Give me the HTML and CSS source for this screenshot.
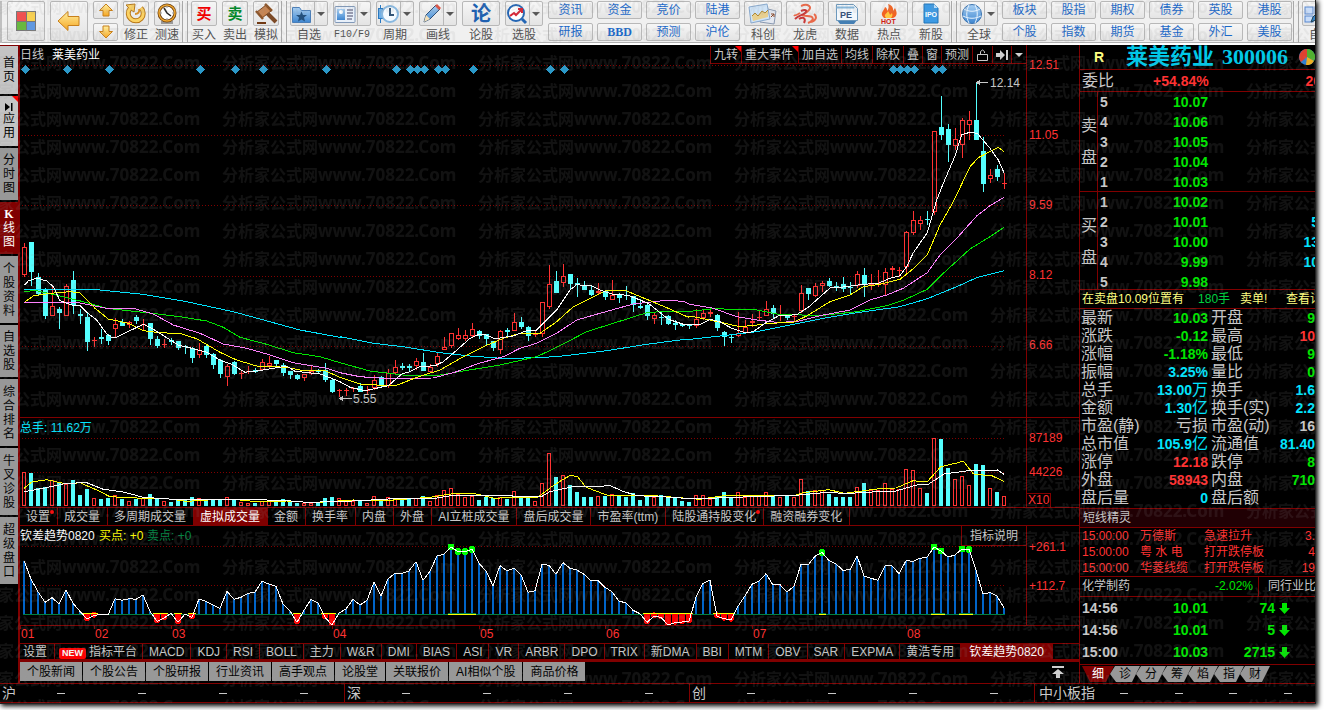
FILE: index.html
```html
<!DOCTYPE html>
<html lang="zh-CN">
<head>
<meta charset="utf-8">
<title>莱美药业 300006</title>
<link rel="stylesheet" href="styles.css">
</head>
<body>
<svg class="defs" width="0" height="0" aria-hidden="true">
  <defs>
    <linearGradient id="gold" x1="0" y1="0" x2="0" y2="1"><stop offset="0" stop-color="#fff0a0"/><stop offset="1" stop-color="#f5a623"/></linearGradient>
    <linearGradient id="blue" x1="0" y1="0" x2="0" y2="1"><stop offset="0" stop-color="#a8d0f4"/><stop offset="1" stop-color="#3f86cf"/></linearGradient>
  </defs>
</svg>
<div class="app">
  <header class="toolbar">
    <div class="group group-first">
      <button class="big" aria-label="首页"><svg width="22" height="22"><rect x="1" y="1" width="20" height="20" fill="#777"/><rect x="2" y="2" width="9" height="9" fill="#f05050"/><rect x="12" y="2" width="8" height="9" fill="#f8d050"/><rect x="2" y="12" width="9" height="8" fill="#68b840"/><rect x="12" y="12" width="8" height="8" fill="#6098e0"/></svg></button>
      <button class="big" aria-label="返回"><svg width="24" height="22"><path d="M1 11 11 1.500v5h11v9H11v5z" fill="url(#gold)" stroke="#c8801c"/></svg></button>
      <div class="pair pair-arrows">
        <button class="small" aria-label="上"><svg width="16" height="14"><path d="M8 1 14.500 7.500H11V13H5V7.500H1.500z" fill="url(#gold)" stroke="#c8801c"/></svg></button>
        <button class="small" aria-label="下"><svg width="16" height="14"><path d="M8 13 14.500 6.500H11V1H5v5.500H1.500z" fill="url(#gold)" stroke="#c8801c"/></svg></button>
      </div>
      <button class="tile"><span class="face"><svg width="22" height="22"><path d="M5 5.500A7.500 7.500 0 1 0 16 5" fill="none" stroke="#b87818" stroke-width="5"/><path d="M1 2l9-1-1 8-3-2z" fill="#fbd264" stroke="#b87818"/><path d="M5 5.500A7.500 7.500 0 1 0 16 5" fill="none" stroke="#fbd264" stroke-width="3"/><path d="M10 11c3 0 5-2 4-5" fill="none" stroke="#d89028" stroke-width="2"/></svg></span><span class="label">修正</span></button>
      <button class="tile"><span class="face"><svg width="22" height="22"><path d="M5 18h12v3H5z" fill="#999"/><circle cx="11" cy="10" r="8" fill="#fff" stroke="#6a3c0c" stroke-width="3"/><circle cx="11" cy="10" r="8" fill="none" stroke="#f0a830" stroke-width="1.500"/><path d="M8 5l3 5 4 3" fill="none" stroke="#222" stroke-width="1.500"/><path d="M11 3v2M11 15v2M4 10h2M16 10h2" stroke="#999"/></svg></span><span class="label">测速</span></button>
    </div>
    <div class="group">
      <button class="tile"><span class="face glyph red">买</span><span class="label">买入</span></button>
      <button class="tile"><span class="face glyph green">卖</span><span class="label">卖出</span></button>
      <button class="tile"><span class="face"><svg width="24" height="22"><path d="M13 10l9 9" stroke="#7c4a26" stroke-width="4"/><path d="M3 9 12 2l5 6-9 7z" fill="#c88450" stroke="#7a4620"/><path d="M2 8l7 8M11 1l7 7" stroke="#8c5428" stroke-width="2.500"/><path d="M3 20h9" stroke="#713a14" stroke-width="2"/></svg></span><span class="label">模拟</span></button>
    </div>
    <div class="group">
      <button class="tile wide"><span class="face"><svg width="22" height="20"><path d="M1.500 3.500h7l2 3h9v12h-18z" fill="url(#blue)" stroke="#4a7eb8"/><path d="M10.500 7.500l1.500 3.500h4l-3 2.500 1 4-3.500-2-3.500 2 1-4-3-2.500h4z" fill="#24507c"/></svg><span class="drop"></span></span><span class="label">自选</span></button>
      <button class="tile wide"><span class="face"><svg width="22" height="20"><rect x="1" y="2.500" width="20" height="16" rx="1" fill="#e8f0fa" stroke="#8098b8"/><rect x="3" y="5" width="8" height="11" fill="url(#blue)"/><circle cx="7" cy="8" r="2" fill="#fff"/><path d="M13 6h6M13 9h6M13 12h6M13 15h5" stroke="#446"/></svg><span class="drop"></span></span><span class="label mono">F10/F9</span></button>
      <button class="tile wide"><span class="face"><svg width="22" height="22"><path d="M3.500 2v18" stroke="#2878c0"/><rect x="1.500" y="5.500" width="4" height="10" fill="#70b0e8" stroke="#2878c0"/><circle cx="13" cy="11" r="8" fill="#f4faff" stroke="#88b8e0" stroke-width="2"/><path d="M13 5v7h4" stroke="#357" stroke-width="2" fill="none"/></svg><span class="drop"></span></span><span class="label">周期</span></button>
      <button class="tile wide"><span class="face"><svg width="22" height="22"><path d="M4 19l2-7L16 2l4 4-10 10z" fill="url(#blue)" stroke="#2c4e78"/><path d="M15 3l2-2 4 4-2 2z" fill="#e05040"/><path d="M6 12l4 4-6 3z" fill="#f4e0b8"/></svg><span class="drop"></span></span><span class="label">画线</span></button>
      <button class="tile wide"><span class="face glyph blue">论</span><span class="label">论股</span></button>
      <button class="tile wide"><span class="face"><svg width="22" height="22"><circle cx="10" cy="10" r="8" fill="#fff" stroke="#2466b4" stroke-width="2"/><path d="M16 16l4 4" stroke="#2466b4" stroke-width="3"/><path d="M4 13l4-3 2 2 5-5M12 6h4v4" fill="none" stroke="#d82030" stroke-width="2"/></svg><span class="drop"></span></span><span class="label">选股</span></button>
      <div class="pairs">
        <button class="small">资讯</button><button class="small">资金</button><button class="small">竞价</button><button class="small">陆港</button>
        <button class="small">研报</button><button class="small bold">BBD</button><button class="small">预测</button><button class="small">沪伦</button>
      </div>
      <div class="tight">
        <button class="tile wide"><span class="face"><svg width="30" height="22"><path d="M12 4l16 4-2 13-14-2z" fill="#e4e8f0" stroke="#8898b0"/><path d="M1 4l18-3 3 15-19 4z" fill="#cfe4f8" stroke="#88a8cc"/><path d="M4 13l3-3 3 3 4-5 3 2 3-3v7L5 18z" fill="#e8d090"/><path d="M4 13l3-3 3 3 4-5 3 2 3-3" fill="none" stroke="#b08830"/><path d="M23 14l3-3m-3 0h3v3" stroke="#842" fill="none"/></svg></span><span class="label">科创</span></button>
        <button class="tile wide"><span class="face"><svg width="26" height="22"><path d="M9 3c7-3 12 1 7 5s-8 5-1 5 8 4 1 7M8 10c-3 2-5 3-6 2M22 11c4 3 1 8-4 8" fill="none" stroke="#e86848" stroke-width="2"/><path d="M9 8c4-2 7-1 4 2-4 3-6 2-10 6M7 16c5-3 7 0 5 4" fill="none" stroke="#c83838" stroke-width="2"/></svg></span><span class="label">龙虎</span></button>
        <button class="tile wide"><span class="face"><svg width="24" height="22"><path d="M2 17l3 4h14l3-4z" fill="#447fb4"/><path d="M1.500 1.500h17l4 4v12h-21z" fill="#f2f7fc" stroke="#6c98bc"/><path d="M1.500 4.500h18" stroke="#88b8dc" stroke-width="2"/><text x="5" y="15" class="icon-text navy">PE</text></svg></span><span class="label">数据</span></button>
        <button class="tile wide"><span class="face"><svg width="24" height="22"><path d="M7 15C2 10 7 8 8 4c2 1 2 2 2 4 2-2 2-5 1-7 6 2 5 6 5 7l2-3c2 4 3 8-2 10z" fill="#f26422"/><path d="M9 15c-3-4 1-4 2-7 1 2 2 3 2 4l2-2c1 2 0 4-1 5z" fill="#ffc840"/><text x="4" y="21" class="icon-text hot">HOT</text></svg></span><span class="label">热点</span></button>
        <button class="tile wide"><span class="face"><svg width="20" height="22"><path d="M3 1h10l4 4v15H3z" fill="#3d9ae4" stroke="#2074b8"/><path d="M13 1v4h4" fill="#b8dcf8"/><text x="4" y="14" class="icon-text white">IPO</text></svg></span><span class="label">新股</span></button>
      </div>
    </div>
    <div class="group group-tight">
      <button class="tile wide"><span class="face"><svg width="22" height="22"><circle cx="11" cy="11" r="9.500" fill="url(#blue)" stroke="#3c74b0"/><path d="M3 6c5 3 11 3 16 0M2 13c6 3 12 3 18 0M8 2c-3 6-3 12 0 18M14 2c3 6 3 12 0 18" fill="none" stroke="#e8f4ff"/></svg><span class="drop"></span></span><span class="label">全球</span></button>
      <div class="pairs">
        <button class="small">板块</button><button class="small">股指</button><button class="small">期权</button><button class="small">债券</button><button class="small">英股</button><button class="small">港股</button>
        <button class="small">个股</button><button class="small">指数</button><button class="small">期货</button><button class="small">基金</button><button class="small">外汇</button><button class="small">美股</button>
      </div>
    </div>
    <div class="group group-last">
      <button class="tile wide"><span class="face face-start"><svg width="22" height="22"><rect x="2" y="4" width="8" height="7" fill="#c8dcf8" stroke="#5888d0"/><rect x="12" y="4" width="8" height="7" fill="#c8dcf8" stroke="#5888d0"/><rect x="2" y="13" width="8" height="6" fill="#c8dcf8" stroke="#5888d0"/><path d="M8 19l2-5 9-9 3 3-9 9z" fill="#3884c4" stroke="#245"/></svg></span><span class="label">自定</span></button>
    </div>
  </header>

  <div class="body">
    <nav class="side">
      <button class="light">首<br>页</button>
      <button class="light marked"><svg width="10" height="10"><path d="M1 1v8l5-4zM7 1h1.500v8H7z" fill="#000"/></svg>应<br>用</button>
      <button>分<br>时<br>图</button>
      <button class="on"><b>K</b><br>线<br>图</button>
      <button class="tall">个<br>股<br>资<br>料</button>
      <button>自<br>选<br>股</button>
      <button class="tall">综<br>合<br>排<br>名</button>
      <button class="tall">牛<br>叉<br>诊<br>股</button>
      <button class="tall">超<br>级<br>盘<br>口</button>
    </nav>

    <main class="charts">
      <section class="panel">
        <div class="plot">
          <div class="chart-head">
            <span>日线</span><h2>莱美药业</h2>
            <div class="chart-tools">
              <button class="marked">九转</button><button class="marked wide-tool">重大事件</button><button>加自选</button><button>均线</button><button>除权</button><button>叠</button><button>窗</button><button>预测</button>
              <button aria-label="锁定"><svg width="13" height="14"><path d="M1.500 6.500h10v6h-10zM4.500 6V3.500q2-3 4 0V5" fill="none" stroke="#c8c8c8"/></svg></button>
              <button aria-label="最新"><svg width="12" height="12"><path d="M0 4h4V1l5 5-5 5V8H0zM10 1h2v10h-2z" fill="#d0d0d0"/></svg></button>
              <button aria-label="更多"><svg width="8" height="8"><path d="M0 2h8L4 6z" fill="#d0d0d0"/></svg></button>
            </div>
          </div>
          <svg id="price" class="price-svg"></svg>
        </div>
        <div class="axis axis-price"><span>12.51</span><span>11.05</span><span>9.59</span><span>8.12</span><span>6.66</span></div>
      </section>

      <section class="panel panel-volume">
        <div class="plot"><svg id="volume" class="volume-svg"></svg></div>
        <div class="axis axis-volume"><span>87189</span><span>44226</span><span class="unit">X10</span></div>
      </section>

      <nav class="tabs tabs-top">
        <button class="dot">设置</button><button>成交量</button><button>多周期成交量</button><button class="on">虚拟成交量</button><button>金额</button><button>换手率</button><button>内盘</button><button>外盘</button><button>AI立桩成交量</button><button>盘后成交量</button><button>市盈率(ttm)</button><button class="dot">陆股通持股变化</button><button>融资融券变化</button>
      </nav>

      <section class="panel panel-trend">
        <div class="plot">
          <svg id="trend" class="trend-svg"></svg>
          <button class="explain">指标说明</button>
        </div>
        <div class="axis axis-trend"><span>+261.1</span><span>+112.7</span></div>
      </section>
      <svg id="months" class="months-svg"></svg>

      <nav class="tabs tabs-bottom">
        <button>设置</button><button class="platform"><em>NEW</em>指标平台</button><button>MACD</button><button>KDJ</button><button>RSI</button><button>BOLL</button><button>主力</button><button>W&amp;R</button><button>DMI</button><button>BIAS</button><button>ASI</button><button>VR</button><button>ARBR</button><button>DPO</button><button>TRIX</button><button>新DMA</button><button>BBI</button><button>MTM</button><button>OBV</button><button>SAR</button><button>EXPMA</button><button>黄浩专用</button><button class="on">钦差趋势0820</button>
      </nav>
      <nav class="news">
        <button>个股新闻</button><button>个股公告</button><button>个股研报</button><button>行业资讯</button><button>高手观点</button><button>论股堂</button><button>关联报价</button><button>AI相似个股</button><button>商品价格</button>
        <button class="top" aria-label="置顶"><svg width="12" height="12"><path d="M0 0h12v2H0zM6 3l6 5H8v4H4V8H0z" fill="#d0d0d0"/></svg></button>
      </nav>
    </main>

    <aside class="quote">
      <h1><small>R</small><span>莱美药业</span> <b>300006</b>
        <svg width="16" height="16"><circle cx="8" cy="8" r="8" fill="#3080d0"/><path d="M8 8V0a8 8 0 0 1 7 12z" fill="#50b030"/><path d="M8 8 2 13A8 8 0 0 1 8 0z" fill="#e04030"/><path d="M8 8l7 4a8 8 0 0 1-8 4z" fill="#f0b020"/></svg>
      </h1>
      <div class="ratio"><span>委比</span><b class="up">+54.84%</b><b class="up cut">20</b></div>
      <div class="book">
        <div class="book-side">卖<br>盘</div>
        <table>
          <tr><th>5</th><td>10.07</td><td></td></tr><tr><th>4</th><td>10.06</td><td></td></tr><tr><th>3</th><td>10.05</td><td></td></tr><tr><th>2</th><td>10.04</td><td></td></tr><tr><th>1</th><td>10.03</td><td></td></tr>
        </table>
      </div>
      <div class="book">
        <div class="book-side">买<br>盘</div>
        <table>
          <tr><th>1</th><td>10.02</td><td></td></tr><tr><th>2</th><td>10.01</td><td>5</td></tr><tr><th>3</th><td>10.00</td><td>13</td></tr><tr><th>4</th><td>9.99</td><td>10</td></tr><tr><th>5</th><td>9.98</td><td></td></tr>
        </table>
      </div>
      <p class="notice"><span>在卖盘10.09位置有</span><span class="down">180手</span><span>卖单!</span><span>查看详</span></p>
      <table class="stats">
        <tr><th>最新</th><td class="down">10.03</td><th>开盘</th><td class="down">9</td></tr>
        <tr><th>涨跌</th><td class="down">-0.12</td><th>最高</th><td class="up">10</td></tr>
        <tr><th>涨幅</th><td class="down">-1.18%</td><th>最低</th><td class="down">9</td></tr>
        <tr><th>振幅</th><td class="vol">3.25%</td><th>量比</th><td class="down">0</td></tr>
        <tr><th>总手</th><td class="vol">13.00<i>万</i></td><th>换手</th><td class="vol">1.6</td></tr>
        <tr><th>金额</th><td class="vol">1.30<i>亿</i></td><th>换手(实)</th><td class="vol">2.2</td></tr>
        <tr><th>市盈(静)</th><td><i>亏损</i></td><th>市盈(动)</th><td>16</td></tr>
        <tr><th>总市值</th><td class="vol">105.9<i>亿</i></td><th>流通值</th><td class="vol">81.40</td></tr>
        <tr><th>涨停</th><td class="up">12.18</td><th>跌停</th><td class="down">8</td></tr>
        <tr><th>外盘</th><td class="up">58943</td><th>内盘</th><td class="down">710</td></tr>
        <tr><th>盘后量</th><td class="vol">0</td><th>盘后额</th><td></td></tr>
      </table>
      <h3>短线精灵</h3>
      <table class="alerts">
        <tr><td>15:00:00</td><td>万德斯</td><td>急速拉升</td><td>3.</td></tr>
        <tr><td>15:00:00</td><td>粤 水 电</td><td>打开跌停板</td><td>4</td></tr>
        <tr><td>15:00:00</td><td>华菱线缆</td><td>打开跌停板</td><td>19</td></tr>
      </table>
      <div class="sector"><span>化学制药</span><span class="down">-2.02%</span><button>同行业比</button></div>
      <table class="ticks">
        <tr><th>14:56</th><td>10.01</td><td>74</td><td><svg width="11" height="11"><path d="M3 0h5v5h3l-5.500 6L0 5h3z" fill="#00e600"/></svg></td></tr>
        <tr><th>14:56</th><td>10.01</td><td>5</td><td><svg width="11" height="11"><path d="M3 0h5v5h3l-5.500 6L0 5h3z" fill="#00e600"/></svg></td></tr>
        <tr><th>15:00</th><td>10.03</td><td>2715</td><td><svg width="11" height="11"><path d="M3 0h5v5h3l-5.500 6L0 5h3z" fill="#00e600"/></svg></td></tr>
      </table>
      <nav class="slants"><button class="on">细</button><button>诊</button><button>分</button><button>筹</button><button>焰</button><button>指</button><button>财</button></nav>
    </aside>
  </div>

  <footer class="indices">
    <div><span>沪</span><i></i><i></i><i></i><i></i></div>
    <div><span>深</span><i></i><i></i><i></i><i></i></div>
    <div><span>创</span><i></i><i></i><i></i><i></i></div>
    <div class="sme"><span>中小板指</span><i></i><i></i><i></i><i></i></div>
  </footer>
  <svg class="watermark" aria-hidden="true">
    <defs><pattern id="mark" x="-34" y="-7" width="256" height="28" patternUnits="userSpaceOnUse"><text x="0" y="20" class="mark-cjk">分析家公式网</text><text x="96" y="20" class="mark-latin">www.70822.Com</text></pattern></defs>
    <rect width="100%" height="100%" fill="url(#mark)"/>
  </svg>
</div>
<script src="charts.js"></script>
</body>
</html>
```

FILE: styles.css
```css
* { box-sizing: border-box; }
body { margin: 0; padding: 0 9px 8px 0; background: #fff; font: 12px/14px "Liberation Sans", "Noto Sans CJK SC", sans-serif; color: #c8c8c8; overflow: hidden; }
button { margin: 0; padding: 0; border: 0; background: none; font: inherit; color: inherit; white-space: nowrap; }
h1, h2, h3, p { margin: 0; font: inherit; }
table { border-collapse: collapse; }
th, td { padding: 0; font-weight: inherit; text-align: left; white-space: nowrap; }
svg { display: block; }
i, em { font-style: normal; }
.defs { position: absolute; }
.app { position: relative; display: flex; flex-direction: column; min-height: calc(100vh - 8px); background: #000; overflow: hidden; outline: 1px solid #222; box-shadow: 2px 2px 5px 1px #000; }

/* toolbar */
.toolbar { display: flex; background: #f0f0f0; border-bottom: 2px solid #fff; box-shadow: inset 0 -1px #b0b0b0; height: 45px; padding-top: 1px; color: #505050; overflow: hidden; }
.group { display: flex; flex: none; gap: 5px; height: 42px; margin-left: 4px; padding: 0 1px 0 3px; border-left: 1px solid #a8a8a8; border-right: 1px solid #a8a8a8; }
.group-first { margin-left: 0; padding: 0 2px 0 5px; border-left: 2px solid #c0c0c0; }
.group-first + .group { padding-right: 2px; }
.group-tight { gap: 4px; }
.group > * { flex: none; }
.big, .small, .face { display: flex; align-items: center; justify-content: center; border: 1px solid #b8b8b8; border-radius: 2px; background: linear-gradient(#f6f6f6, #e4e4e4); }
.big { width: 38px; height: 40px; }
.small { width: 45px; height: 18px; color: #1a68c8; }
.small.bold { font: bold 12px "Liberation Serif", serif; }
.pair { display: grid; gap: 4px; align-content: start; }
.pair-arrows .small { width: 25px; }
.pairs { display: grid; grid-auto-flow: row; grid-template-columns: repeat(4, 45px); gap: 4px; align-content: start; }
.group-tight .pairs { grid-template-columns: repeat(6, 45px); }
.pairs + .tight { margin-left: -1px; }
.tight { display: flex; gap: 4px; }
.tile { display: flex; flex-direction: column; align-items: center; width: 26px; }
.wide { width: 38px; }
.face { width: 100%; height: 25px; }
.face-start { justify-content: flex-start; }
.label { padding-top: 2px; line-height: 14px; }
.label.mono { font: 10px/14px "Liberation Mono", monospace; }
.glyph { font-size: 15px; font-weight: bold; }
.glyph.red { color: #f00000; }
.glyph.green { color: #008828; }
.glyph.blue { color: #2060b0; font-size: 20px; }
.drop { display: flex; align-items: center; height: 100%; margin-left: 1px; padding: 0 2px; border-left: 1px solid #b8b8b8; }
.drop::after { content: ""; border: 4px solid transparent; border-top-color: #555; border-bottom: 0; }
.icon-text { font: bold 9px "Liberation Sans", sans-serif; }
.toolbar .navy { fill: #345078; font-size: 9px; }
.toolbar .hot { fill: #d02010; font-size: 7px; }
.toolbar .white { fill: #fff; font-size: 7px; }

.body { display: flex; flex: 1; }

/* left navigation */
.side { display: flex; flex-direction: column; gap: 2px; width: 20px; border-top: 1px solid #800000; border-right: 2px solid #800000; }
.side button { width: 18px; padding: 5px 0; background: #989898; color: #000; text-align: center; line-height: 14px; white-space: normal; position: relative; }
.side .tall { padding: 6px 0 5px; }
.side .light { background: #c4c4c4; padding: 10px 0; }
.side .light.marked { padding: 6px 0; }
.side svg { margin: 0 auto; }
.side .on { background: #800000; color: #fff; }
.side b { font-family: "Liberation Serif", serif; }
.marked { position: relative; }
.marked::after { content: ""; position: absolute; top: 0; right: 0; border: 3px solid transparent; border-top-color: #f00; border-right-color: #f00; }

/* chart column */
.charts { flex: 1; min-width: 0; border-right: 1px solid #800000; }
.panel { display: flex; border-bottom: 1px solid #800000; }
.plot { position: relative; flex: 1; min-width: 0; border-right: 1px solid #800000; }
.plot > svg { width: 100%; }
.axis { width: 52px; padding-left: 2px; color: #ff3232; }
.axis span { display: block; }
.chart-head { display: flex; gap: 8px; height: 19px; padding-top: 1px; line-height: 18px; }
.chart-head h2 { color: #fff; }
.chart-tools { display: flex; margin-left: auto; border-bottom: 1px solid #800000; }
.chart-tools button { display: flex; align-items: center; padding: 0 3px; border-left: 1px solid #800000; }
.chart-tools .wide-tool { padding: 0 5px 0 3px; }
.price-svg { height: 353px; }
.axis-price { padding-top: 13px; }
.axis-price span { height: 70px; }
.volume-svg { height: 89px; }
.axis-volume { padding-top: 13px; }
.axis-volume span { height: 34px; }
.axis-volume span:nth-child(2) { height: 28px; }
.axis-volume .unit { width: 25px; height: 14px; margin-left: -3px; padding-left: 1px; border: 1px solid #800000; border-bottom: 0; line-height: 13px; }
.trend-svg { height: 99px; }
.axis-trend { padding-top: 14px; }
.axis-trend span { height: 39px; }
.explain { position: absolute; top: 0; right: 0; height: 20px; padding: 0 8px; border: 1px solid #800000; border-width: 0 0 1px 1px; background: #000; }
.months-svg { width: 100%; height: 17px; }
.up { color: #ff3232; fill: #ff3232; }
.down { color: #00e600; }
.vol { color: #00e5ff; }
svg .c-vol { fill: #00e5ff; }
svg .c-white { fill: #fff; }
svg .c-yellow { fill: #ffff00; }
svg .c-sea { fill: #008040; }
svg .c-gray { fill: #c8c8c8; }
svg text { font-size: 12px; }

.tabs { display: flex; height: 18px; border-bottom: 1px solid #800000; }
.tabs button { position: relative; padding: 0 7px 0 6px; border-right: 1px solid #800000; }
.tabs .on { background: #800000; color: #fff; }
.tabs .dot::after { content: ""; position: absolute; top: 2px; right: 3px; width: 4px; height: 4px; border-radius: 2px; background: #f00; }
.tabs-bottom { height: 19px; border-top: 1px solid #800000; border-bottom: 3px solid #800000; }
.tabs-bottom button { padding: 0 6px; flex: none; }
.tabs-bottom button:first-child { padding: 0 7px 0 3px; }
.tabs-bottom .platform { padding: 0 5px 0 4px; }
.tabs-bottom .on { padding: 0 8px; }
.tabs em { display: inline-block; margin-right: 3px; padding: 0 3px; border-radius: 2px; background: #f00; color: #fff; font-weight: bold; font-size: 9px; line-height: 11px; }
.news { display: flex; gap: 1px; height: 19px; }
.news button { padding: 0 7px; background: #989898; color: #000; }
.news .top { margin-left: auto; padding: 0 15px; background: none; }

/* quote panel */
.quote { width: 235px; overflow: hidden; }
.quote h1 { display: flex; align-items: center; height: 25px; padding-left: 14px; border-bottom: 1px solid #800000; color: #00c8e8; font: bold 22px/24px "Liberation Serif", "Noto Sans CJK SC", serif; white-space: nowrap; }
.quote h1 small { width: 33px; color: #ffff80; font: bold 14px "Liberation Sans", sans-serif; }
.quote h1 b { margin: 0 11px 0 8px; }
.quote h1 svg { flex: none; }
.ratio { display: flex; align-items: center; height: 22px; padding-left: 2px; border-bottom: 1px solid #800000; font-size: 16px; }
.ratio b { font-size: 14px; }
.ratio span { width: 71px; }
.ratio .cut { margin: 0 -6px 0 auto; }
.book { display: flex; height: 100px; border-bottom: 1px solid #800000; font-size: 16px; }
.book + .book { height: 98px; }
.book-side { flex: none; width: 18px; padding: 18px 0 0 1px; border-right: 1px solid #800000; line-height: 32px; }
.book table { width: 100%; font-weight: bold; font-size: 14px; margin-right: -4px; }
.book tr { height: 20px; }
.book th { width: 40px; padding-left: 2px; font-size: 14px; font-weight: bold; }
.book td { width: 70px; text-align: right; color: #00e600; }
.book td + td { width: auto; color: #00e5ff; }
.notice { display: flex; align-items: center; height: 19px; padding-left: 2px; border-bottom: 1px solid #800000; color: #ffff80; white-space: nowrap; }
.notice span { margin-right: 10px; }
.notice span:first-child { margin-right: 14px; }
.notice span:last-child { margin: 0 -7px 0 auto; }
.notice .down { color: #00d040; }
.stats { width: 100%; table-layout: fixed; font-size: 16px; line-height: 18px; }
.stats tr, .stats td { height: 18px; }
.stats th { width: 66px; padding-left: 1px; white-space: nowrap; }
.stats td { width: 62px; text-align: right; font-size: 14px; font-weight: bold; line-height: 16px; }
.stats th + td + th { padding-left: 3px; }
.stats td:last-child { width: 41px; }
.stats td i { font-size: 16px; font-weight: normal; }
.quote h3 { height: 20px; margin-top: 1px; padding-left: 3px; border: 1px solid #800000; border-width: 1px 0; background: #200004; line-height: 18px; }
.alerts { width: 100%; color: #ff3232; }
.alerts tr { height: 16px; }
.alerts td { width: 58px; padding-left: 2px; }
.alerts td + td { width: 64px; }
.alerts td + td + td { width: 70px; }
.alerts td:last-child { width: auto; text-align: right; }
.sector { display: flex; height: 21px; border: 1px solid #800000; border-width: 1px 0; line-height: 19px; padding-left: 2px; }
.sector .down { margin-left: auto; padding-right: 5px; }
.sector button { margin-right: -1px; padding-left: 9px; border-left: 1px solid #800000; }
.ticks { width: 100%; font-size: 14px; }
.ticks tr { height: 22px; }
.ticks th { width: 58px; padding-left: 2px; font-weight: bold; }
.ticks td { width: 70px; font-weight: bold; text-align: right; color: #00e600; }
.ticks td + td { width: 67px; }
.ticks td:last-child { width: auto; padding-left: 4px; }
.slants { display: flex; height: 19px; margin-top: 1px; padding: 1px 0 1px 2px; border-top: 1px solid #800000; }
.slants button { width: 30px; margin-right: -4px; background: #989898; color: #000; clip-path: polygon(0 50%, 5px 0, 100% 0, 22px 100%, 6px 100%); }
.slants .on { width: 32px; background: #800000; color: #fff; clip-path: polygon(0 0, 100% 0, 24px 100%, 8px 100%); }

/* market indices */
.indices { display: grid; grid-template-columns: 1fr 1fr 1fr 280px; height: 20px; border: 1px solid #800000; border-width: 1px 0; font-size: 14px; line-height: 17px; }
.indices div { display: grid; grid-template-columns: 18px repeat(4, 1fr); align-items: center; padding-left: 2px; border-right: 1px solid #800000; }
.indices .sme { grid-template-columns: 58px repeat(4, 1fr); padding-left: 4px; border: 0; }
.indices i { justify-self: center; width: 8px; height: 1px; background: #c8c8c8; }

.watermark { position: absolute; inset: 0; width: 100%; height: 100%; pointer-events: none; }
.watermark text { fill: rgba(150, 150, 150, .12); font-weight: bold; }
svg .mark-cjk { font-size: 16px; }
svg .mark-latin { font: bold 17px "Noto Sans", sans-serif; }
```

FILE: charts.js
```js
const RED = '#ff3232', CYAN = '#54ffff', FRAME = '#800000';
const STEP = 7, LEFT = 22, MID = 24.5;

// one bar per day: direction, high, body top, body bottom, low
const candles = `r243,247,275,277 c242,242,272,286 c273,277,294,295 c288,290,316,319 r285,306,316,316 c307,309,313,329 r284,286,316,316 c271,280,305,314 c309,314,316,324 c313,317,342,351
r337,340,341,347 c329,337,339,344 c334,335,341,345 r318,324,329,338 c319,322,326,326 r321,322,325,328 c315,317,321,324 r319,324,325,330 c323,323,339,345 c336,339,346,348
r339,344,345,348 c338,340,342,345 c341,341,348,350 c345,346,347,354 c347,348,358,363 r343,350,355,358 c345,346,355,358 c353,354,365,369 c359,360,374,378 r364,366,377,386
c361,362,374,375 r371,373,374,379 r366,371,372,374 c368,370,372,373 r359,362,370,371 r356,363,366,368 c360,360,364,367 c363,365,373,376 c371,371,375,379 c374,375,379,380
r374,374,378,381 r366,371,374,375 c369,371,372,374 c363,370,380,382 c378,380,392,393 r389,390,391,397 r388,390,391,396 r387,388,389,392 c383,386,392,392 r386,390,391,394
r375,380,388,390 c376,377,386,387 r369,373,386,388 r360,367,373,375 c363,366,368,370 c364,366,368,371 r358,361,366,370 c353,362,371,371 r364,367,372,372 r353,356,364,367
r337,347,350,350 r333,333,346,348 r328,335,339,340 r330,335,339,341 r323,329,336,338 c330,331,336,339 c334,334,339,346 c341,341,348,351 r330,331,350,354 c328,330,332,337
r313,322,331,331 c317,322,327,329 c326,327,336,341 r330,334,335,337 r302,302,334,337 r265,284,307,309 c271,281,293,293 r264,276,283,287 c274,274,284,290 c278,283,285,297
c281,286,290,290 c286,290,295,296 r283,291,293,295 c290,291,297,300 r280,295,300,300 c293,294,298,303 c286,295,296,300 c296,296,305,312 c299,306,308,309 c303,305,316,320
r312,315,319,324 c311,317,318,325 c315,316,324,325 c320,323,325,330 c323,324,326,327 c324,325,326,329 r309,319,326,328 r310,313,318,320 r309,312,314,317 c314,315,328,331
c331,332,337,346 c335,337,338,343 r312,333,336,337 r320,327,333,334 r314,321,323,327 r311,317,318,321 r301,309,316,316 c305,308,314,318 r305,314,315,321 c314,315,318,320
r315,316,317,322 r285,293,311,313 c288,288,294,300 r283,286,296,297 r281,283,286,292 c278,281,286,287 c282,286,287,291 c277,284,289,292 c282,287,288,294 r271,274,286,288
c268,275,284,297 r274,283,285,290 r270,283,284,287 r268,272,285,295 r266,268,270,277 r267,270,271,277 r231,232,267,274 r211,220,233,235 r216,220,224,230 c211,219,220,225
r131,131,212,215 c96,127,135,140 c124,129,145,162 r128,139,146,150 r118,120,145,158 r111,120,125,140 c82,120,140,140 c137,151,184,192 r169,175,179,183 c165,169,177,181 r173,183,184,189`
  .split(/\s+/).map(s => [s[0], ...s.slice(1).split(',').map(Number)]);

// bar tops, in thirds of a pixel below the panel origin at 410
const volumes = [186,189,233,232,210,215,222,210,255,237,265,267,264,256,267,273,267,264,252,266,273,276,271,268,262,265,268,269,268,260,268,277,279,279,272,272,272,268,275,279,279,279,279,264,261,265,273,273,272,280,258,273,262,264,268,267,264,258,274,256,240,234,252,261,258,270,262,265,260,267,243,262,261,273,219,130,201,195,225,246,261,261,258,257,252,255,262,250,270,261,262,255,262,262,273,276,256,255,267,258,246,262,247,262,258,259,246,258,262,256,260,207,243,240,241,252,262,261,261,231,219,240,240,219,237,237,177,180,234,249,84,87,174,207,198,225,162,165,234,246,258];
const trend = [455,510,548,580,566,584,542,583,607,630,620,615,618,569,574,569,571,558,607,637,627,613,640,615,625,570,577,588,598,547,571,565,553,549,517,525,532,585,606,640,604,571,582,625,648,612,600,571,588,574,520,561,510,493,493,486,458,514,487,441,436,414,428,428,421,463,486,530,470,486,477,497,550,545,466,469,496,461,478,483,496,516,514,535,548,577,581,604,614,640,622,625,648,641,639,637,565,523,514,622,629,632,592,560,526,516,494,528,527,549,532,466,468,442,430,455,465,484,482,440,501,508,514,470,470,494,455,457,448,445,414,426,444,438,420,421,484,555,551,561,597];
const peaks = [61, 62, 63, 64, 114, 130, 131, 134, 135];

// every average is stored in sections: origin x, origin y, units per pixel across, points
const averages = {
  '#00e5ff': [[0,100,3,'73,567 270,567 430,583 560,605 700,635 900,690 1020,712'],[340,230,3,'0,320 100,340 190,350 300,368 390,378 500,386 650,380 800,362 920,343 1020,330'],[690,60,3,'0,838 100,827 200,815 300,795 400,775 500,758 630,740 712,716 800,680 860,653 942,632']],
  '#00e600': [[0,100,3,'73,574 110,572 180,588 250,605 320,625 440,638 540,650 620,663 670,682 720,712 800,733 880,758 960,770 1010,785'],[340,230,3,'0,398 90,423 190,435 300,435 370,423 480,405 590,380 650,352 740,305 820,280 920,248 960,245 1020,244'],[690,60,3,'0,754 70,746 200,750 270,764 400,766 500,755 590,737 640,721 712,688 760,640 840,567 900,530 942,502']],
  '#ff80ff': [[0,100,3,'73,607 240,609 320,625 400,625 460,642 520,675 600,700 670,732 740,745 800,762 880,788 980,805'],[340,230,3,'0,428 60,440 130,445 280,444 350,425 410,402 490,380 540,355 590,340 650,310 710,270 780,250 880,222 980,211 1030,214'],[690,60,3,'0,733 70,745 140,770 200,780 260,787 320,785 400,765 480,750 540,720 590,705 640,685 712,638 750,585 800,535 860,468 900,437 942,412']],
  '#ffff00': [[0,100,3,'75,605 100,588 150,580 210,575 240,578 285,625 325,657 385,670 430,692 470,697 545,702 590,716 660,757 710,780 770,798 860,802 910,812 975,812'],[340,230,3,'0,442 60,462 110,465 160,468 180,462 230,442 300,420 370,380 430,350 490,325 540,310 600,310 650,275 700,230 760,200 800,180 860,183 920,208 985,235 1045,262'],[690,60,3,'0,768 60,780 150,800 200,795 240,790 310,787 350,768 420,725 480,705 520,680 570,673 630,658 665,630 712,585 750,495 790,425 840,320 865,293 925,262 942,275']],
  '#ffffff': [[0,100,3,'73,556 85,543 110,534 140,543 160,560 180,602 215,615 240,616 262,638 290,660 320,702 335,712 348,712 430,673 455,685 535,735 575,745 620,757 665,783 695,793 735,817 785,811 860,798 885,814 960,822 1000,837'],[340,230,3,'0,455 30,472 75,482 145,467 185,432 210,425 240,410 285,407 310,395 345,365 390,325 415,314 435,314 465,326 520,318 560,302 590,300 615,275 650,240 690,180 710,164 755,168 780,180 820,193 865,196 925,220 985,268 1030,283'],[690,60,3,'0,795 30,794 60,778 90,785 125,805 165,818 190,815 225,790 265,768 320,764 355,742 420,684 470,680 520,673 565,670 600,655 630,647 650,620 670,578 712,518 740,420 760,370 795,288 815,224 840,217 862,220 900,265 925,300 942,338']]
};
const volumeAverages = {
  '#ffff00': [[0,410,3,'72,235 95,216 140,209 200,222 240,218 290,240 330,260 430,265 490,265 560,274 660,268 700,268 780,276 860,273 940,278 1060,270 1140,273 1290,262 1365,250 1420,250 1480,264'],[500,410,2.904,'0,264 110,262 150,230 180,210 205,196 225,200 250,232 310,255 380,257 460,258 580,268 650,257 860,255 880,248 955,239 1000,250 1110,235 1150,234 1200,212 1240,216 1280,170 1330,158 1345,153 1375,192 1430,198 1463,214']],
  '#ffffff': [[0,410,3,'72,245 130,235 200,220 260,218 310,238 370,246 430,262 520,268 700,268 800,270 860,272 920,277 1000,275 1080,272 1180,266 1300,266 1360,256 1450,257'],[500,410,2.904,'0,257 120,260 145,245 220,228 260,230 320,227 360,245 400,257 500,262 560,267 680,262 860,256 940,248 1020,250 1060,247 1150,243 1220,222 1245,222 1290,192 1360,182 1445,180 1463,193']]
};

const rect = (x, y, w, h, fill, stroke = 'none') => `<rect x="${x}" y="${y}" width="${w}" height="${h}" fill="${fill}" stroke="${stroke}"/>`;
const seg = (x1, y1, x2, y2, color) => `<line x1="${x1}" y1="${y1}" x2="${x2}" y2="${y2}" stroke="${color}"/>`;
const text = (x, y, cls, s) => `<text x="${x}" y="${y}" class="${cls}">${s}</text>`;
const grid = y => `<line x1="22" y1="${y}.5" x2="100%" y2="${y}.5" stroke="${FRAME}" stroke-dasharray="1 2"/>`;
const curves = set => Object.entries(set).map(([color, parts]) => {
  const points = parts.flatMap(([ox, oy, k, list]) => list.split(' ').map(p => {
    const [x, y] = p.split(',');
    return `${(ox + x / k).toFixed(1)},${(oy + y / 3).toFixed(1)}`;
  }));
  return `<polyline points="${points.join(' ')}" fill="none" stroke="${color}"/>`;
}).join('');
const draw = (id, top, content) => {
  document.getElementById(id).innerHTML = `<g transform="translate(-20 ${-top})" shape-rendering="crispEdges">${content}</g>`;
};

function drawPrice() {
  let out = [65, 135, 205, 276, 346].map(grid).join('');
  candles.forEach(([dir, high, top, bottom, low], i) => {
    const x = LEFT + i * STEP, mid = MID + i * STEP;
    const color = dir === 'r' ? RED : CYAN;
    out += seg(mid, high, mid, top, color) + seg(mid, bottom, mid, low, color);
    out += dir === 'r' && bottom - top > 2
      ? rect(x + .5, top + .5, 4, bottom - top - 1, '#000', RED)
      : rect(x, top, 5, Math.max(1, bottom - top), color);
  });
  out += curves(averages);
  [25,67,109,200,235,263,326,396,410,417,424,438,445,473,550,564,893,900,907,914,935,942].forEach(x => {
    out += `<path d="M${x - 4} 69.5l4.500-4.500 4.500 4.500-4.500 4.500z" fill="#2a98c8"/>`;
  });
  out += seg(978, 82.5, 988, 82.5, '#c8c8c8') + '<path d="M976 82.500l4-3v6z" fill="#c8c8c8"/>' + text(990, 87, 'c-gray', '12.14');
  out += seg(341, 398.5, 352, 398.5, '#c8c8c8') + '<path d="M339 398.500l4-3v6z" fill="#c8c8c8"/>' + text(353, 403, 'c-gray', '5.55');
  draw('price', 64, out);
}

function drawVolume() {
  let out = grid(438) + grid(472);
  volumes.forEach((v, i) => {
    const x = LEFT + i * STEP, y = Math.round(410 + v / 3);
    out += candles[i][0] === 'r' ? rect(x + .5, y + .5, 3, 505 - y, '#000', RED) : rect(x, y, 4, 506 - y, CYAN);
  });
  out += curves(volumeAverages) + text(20, 432, 'c-vol', '总手: 11.62万');
  draw('volume', 418, out);
}

function drawTrend() {
  const base = 615;
  let out = grid(547) + grid(586), under = '', marks = '';
  const ys = trend.map(v => 410 + v / 3);
  ys.forEach((y, i) => {
    const mid = 24 + i * STEP;
    if (y < base) out += rect(mid - 1, y.toFixed(1), 2, (base - y).toFixed(1), '#0064c8');
    if (y > base + 1) {
      under += `<circle cx="${mid}" cy="${y - 1}" r="3" fill="#f00"/>` + rect(mid - 3, base, 6, y - base, '#f00');
      marks += rect(mid - 4, base - 1, 8, 1, '#ffff00');
    }
    if (peaks.includes(i)) {
      under += `<circle cx="${mid}" cy="${y}" r="3.500" fill="#0f0"/>`;
      marks += rect(mid - 3, base, 7, 1, '#ffff00') + rect(mid - 3, base - 1, 7, 1, '#008040');
    }
  });
  out += rect(23, base, 982, 1, '#008040') + under + marks;
  out += `<polyline points="${ys.map((y, i) => `${24 + i * STEP},${y.toFixed(1)}`).join(' ')}" fill="none" stroke="#fff"/>`;
  out += text(20, 541, 'c-white', '钦差趋势0820') + text(99, 541, 'c-yellow', '买点: +0') + text(147, 541, 'c-sea', '卖点: +0');
  draw('trend', 527, out);
}

function drawMonths() {
  const starts = [[20, '01'], [94, '02'], [171, '03'], [332, '04'], [479, '05'], [605, '06'], [752, '07'], [906, '08']];
  draw('months', 627, starts.map(([x, m]) => seg(x + .5, 627, x + .5, 630, FRAME) + text(x + 1, 639, 'up', m)).join(''));
}

drawPrice();
drawVolume();
drawTrend();
drawMonths();
```
